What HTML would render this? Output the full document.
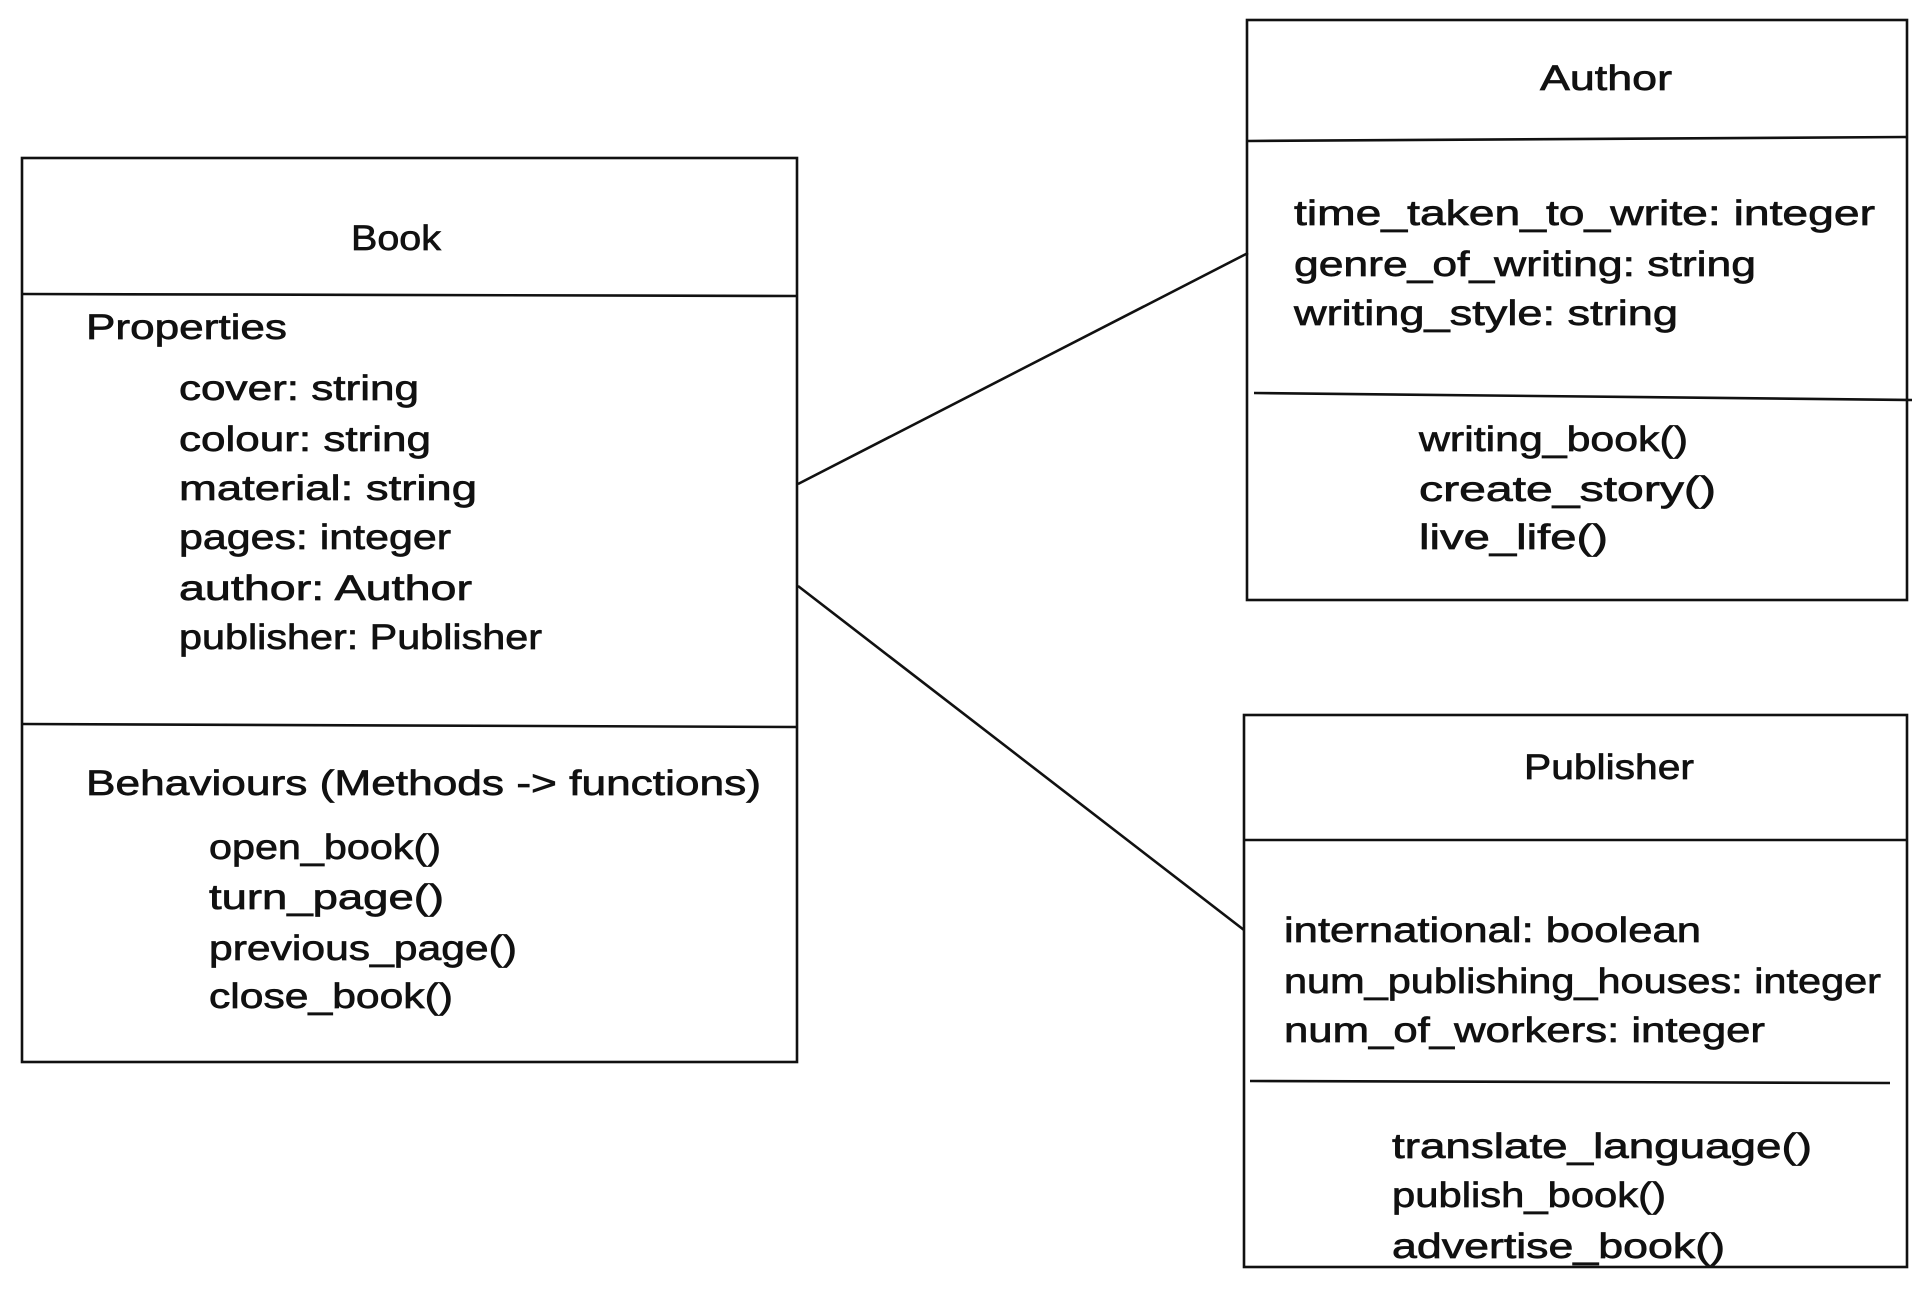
<!DOCTYPE html>
<html><head><meta charset="utf-8"><style>
html,body{margin:0;padding:0;background:#fff;width:1928px;height:1289px;overflow:hidden}
svg{display:block}
text{font-family:"Liberation Sans",sans-serif;font-size:35px;fill:#111;stroke:#111;stroke-width:0.7}
</style></head><body>
<svg width="1928" height="1289" viewBox="0 0 1928 1289" xmlns="http://www.w3.org/2000/svg">
<g fill="none" stroke="#111" stroke-width="2.6">
<rect x="22" y="158" width="775" height="904"/>
<line x1="22" y1="294" x2="797" y2="296"/>
<line x1="22" y1="724" x2="797" y2="727"/>
<rect x="1247" y="20" width="660" height="580"/>
<line x1="1247" y1="141" x2="1907" y2="137"/>
<line x1="1254" y1="393" x2="1912" y2="400"/>
<rect x="1244" y="715" width="663" height="552"/>
<line x1="1244" y1="840" x2="1907" y2="840"/>
<line x1="1250" y1="1081" x2="1890" y2="1083"/>
<line x1="798" y1="484" x2="1248" y2="253"/>
<line x1="798" y1="586" x2="1244" y2="930"/>
</g>
<text x="351" y="250" textLength="90" lengthAdjust="spacingAndGlyphs">Book</text>
<text x="86" y="339" textLength="201" lengthAdjust="spacingAndGlyphs">Properties</text>
<text x="179" y="400" textLength="240" lengthAdjust="spacingAndGlyphs">cover: string</text>
<text x="179" y="451" textLength="252" lengthAdjust="spacingAndGlyphs">colour: string</text>
<text x="179" y="500" textLength="298" lengthAdjust="spacingAndGlyphs">material: string</text>
<text x="179" y="549" textLength="272" lengthAdjust="spacingAndGlyphs">pages: integer</text>
<text x="179" y="600" textLength="293" lengthAdjust="spacingAndGlyphs">author: Author</text>
<text x="179" y="649" textLength="363" lengthAdjust="spacingAndGlyphs">publisher: Publisher</text>
<text x="86" y="795" textLength="675" lengthAdjust="spacingAndGlyphs">Behaviours (Methods -&gt; functions)</text>
<text x="209" y="859" textLength="232" lengthAdjust="spacingAndGlyphs">open_book()</text>
<text x="209" y="909" textLength="235" lengthAdjust="spacingAndGlyphs">turn_page()</text>
<text x="209" y="960" textLength="308" lengthAdjust="spacingAndGlyphs">previous_page()</text>
<text x="209" y="1008" textLength="244" lengthAdjust="spacingAndGlyphs">close_book()</text>
<text x="1540" y="90" textLength="132" lengthAdjust="spacingAndGlyphs">Author</text>
<text x="1294" y="225" textLength="581" lengthAdjust="spacingAndGlyphs">time_taken_to_write: integer</text>
<text x="1294" y="276" textLength="462" lengthAdjust="spacingAndGlyphs">genre_of_writing: string</text>
<text x="1294" y="325" textLength="384" lengthAdjust="spacingAndGlyphs">writing_style: string</text>
<text x="1419" y="451" textLength="269" lengthAdjust="spacingAndGlyphs">writing_book()</text>
<text x="1419" y="501" textLength="297" lengthAdjust="spacingAndGlyphs">create_story()</text>
<text x="1419" y="549" textLength="189" lengthAdjust="spacingAndGlyphs">live_life()</text>
<text x="1524" y="779" textLength="170" lengthAdjust="spacingAndGlyphs">Publisher</text>
<text x="1284" y="942" textLength="417" lengthAdjust="spacingAndGlyphs">international: boolean</text>
<text x="1284" y="993" textLength="597" lengthAdjust="spacingAndGlyphs">num_publishing_houses: integer</text>
<text x="1284" y="1042" textLength="481" lengthAdjust="spacingAndGlyphs">num_of_workers: integer</text>
<text x="1392" y="1158" textLength="420" lengthAdjust="spacingAndGlyphs">translate_language()</text>
<text x="1392" y="1207" textLength="274" lengthAdjust="spacingAndGlyphs">publish_book()</text>
<text x="1392" y="1258" textLength="333" lengthAdjust="spacingAndGlyphs">advertise_book()</text>
</svg>
</body></html>
